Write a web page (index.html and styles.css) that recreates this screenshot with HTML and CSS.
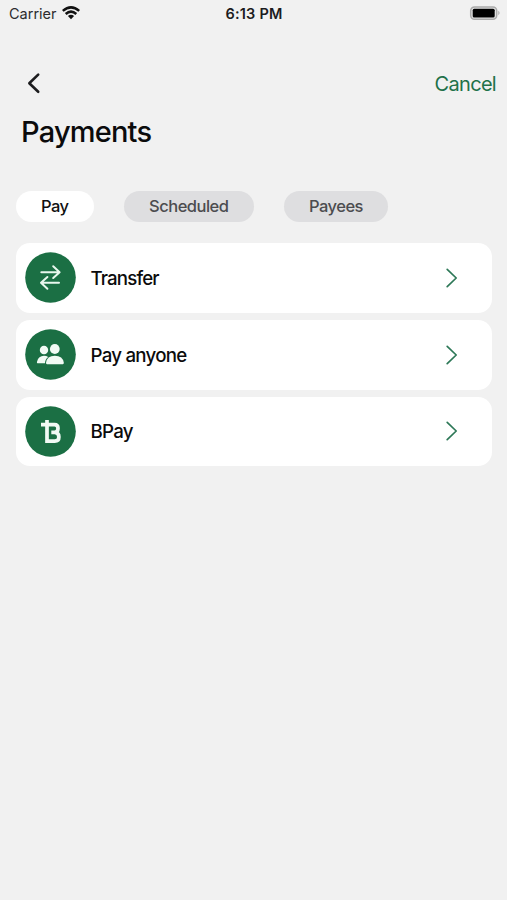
FILE: index.html
```html
<!DOCTYPE html>
<html lang="en">
<head>
<meta charset="utf-8">
<title>Payments</title>
<link rel="stylesheet" href="styles.css">
</head>
<body>
<header class="status">
  <div class="status-left"><span class="carrier">Carrier</span>
    <svg class="wifi" width="18" height="14" viewBox="0 0 18 14"><g fill="none" stroke="#111" stroke-width="2.5"><path d="M.8 4.9Q9-2.2 17.2 4.9"/><path d="M3.7 8Q9 3.2 14.3 8"/></g><path d="M5.9 10Q9 7.4 12.1 10L9 13.3Z" fill="#111"/></svg>
  </div>
  <span class="clock">6:13 PM</span>
  <svg class="battery" width="32" height="16" viewBox="0 0 32 16"><rect x="1.7" y="1.9" width="26" height="12.4" rx="3.8" fill="#e4e4e4" stroke="#aaa" stroke-width="1.5"/><rect x="3.7" y="3.8" width="22" height="8.7" rx="1.5" fill="#000"/><path d="M29.3 5.8q2.6 2.2 0 4.4z" fill="#aaa"/></svg>
</header>
<nav class="nav">
  <svg class="back" width="16" height="24" viewBox="0 0 16 24"><path d="M12.2 3.6L3.3 12.2L12.2 20.8" fill="none" stroke="#1c1c1e" stroke-width="2.6" stroke-linecap="round" stroke-linejoin="round"/></svg>
  <a class="cancel">Cancel</a>
</nav>
<h1 class="title">Payments</h1>
<div class="tabs">
  <button class="tab tab-pay active">Pay</button>
  <button class="tab tab-scheduled">Scheduled</button>
  <button class="tab tab-payees">Payees</button>
</div>
<main class="list">
  <section class="row">
    <svg class="icon" viewBox="0 0 51 51"><circle cx="25.5" cy="25.5" r="25.3"/><path class="line" d="M16.3 20.3H34M28.2 14.3L34.6 20.3L28.2 26M34 30.8H16.3M22.4 25L16 30.8L22.4 36.7"/></svg>
    <span class="label transfer">Transfer</span>
    <svg class="chevron" viewBox="0 0 14 20"><path d="M2.2 1.4L11.2 10L2.2 18.6"/></svg>
  </section>
  <section class="row">
    <svg class="icon" viewBox="0 0 51 51"><circle cx="25.5" cy="25.5" r="25.3"/><g class="solid"><ellipse cx="19" cy="21" rx="4.2" ry="4.3"/><path d="M12.6 34.3Q11.6 34.3 12 32.7Q13.5 26.9 19 26.8Q21.4 26.8 23.2 27.9Q20 30 20 34.3Z"/><ellipse cx="29.8" cy="20" rx="4.9" ry="5.1"/><path d="M22 35.2Q20.9 35.2 21 33.8Q21.9 26.7 29.8 26.7Q37.9 26.7 38.8 33.8Q38.9 35.2 37.8 35.2Z"/></g></svg>
    <span class="label anyone">Pay anyone</span>
    <svg class="chevron" viewBox="0 0 14 20"><path d="M2.2 1.4L11.2 10L2.2 18.6"/></svg>
  </section>
  <section class="row">
    <svg class="icon" viewBox="0 0 51 51"><circle cx="25.5" cy="25.5" r="25.3"/><path class="mark" d="M16 18.6H29.5Q33 18.6 33 22.3Q33 26.4 29.5 26.4H26.3M29.8 26.4Q33.9 26.8 33.9 31Q33.9 35.1 29.8 35.1H22V14"/></svg>
    <span class="label bpay">BPay</span>
    <svg class="chevron" viewBox="0 0 14 20"><path d="M2.2 1.4L11.2 10L2.2 18.6"/></svg>
  </section>
</main>
</body>
</html>
```
FILE: styles.css
```css
* { box-sizing: border-box; }
body {
  margin: 0;
  min-height: 900px;
  background: #f1f1f1;
  color: #0b0b0c;
  font-family: Inter, "Liberation Sans", sans-serif;
}
svg { display: block; flex: none; }
.status {
  display: grid;
  grid-template-columns: 1fr auto 1fr;
  align-items: center;
  height: 26px;
  padding: 0 6px 0 9px;
}
.status-left { display: flex; align-items: center; gap: 5px; }
.carrier { font-size: 14.5px; letter-spacing: 0; color: #2c2c2e; }
.clock { font-size: 14.5px; font-weight: 600; letter-spacing: 0.2px; margin-right: 2px; color: #1c1c1e; }
.battery { justify-self: end; }
.nav {
  display: flex;
  justify-content: space-between;
  align-items: center;
  height: 40px;
  margin-top: 37px;
  padding: 0 11px 0 26px;
}
.cancel { font-size: 20px; line-height: 40px; letter-spacing: -0.7px; margin-top: 1px; color: #217149; }
.title {
  margin: 9px 0 0 21px;
  font-size: 29px;
  line-height: 40px;
  font-weight: 500;
  letter-spacing: -0.8px;
}
.tabs { display: flex; gap: 30.2px; margin: 39px 0 0 16px; }
.tab {
  height: 31px;
  padding: 0;
  border: 0;
  border-radius: 16px;
  background: #dedee0;
  color: #4c4c4f;
  font: 500 16.5px/31px Inter, "Liberation Sans", sans-serif;
  letter-spacing: -0.5px;
}
.tab.active { background: #fff; color: #111; }
.tab-pay { width: 77.6px; }
.tab-scheduled { width: 130px; }
.tab-payees { width: 104px; }
.list { display: flex; flex-direction: column; gap: 7px; margin: 21px 15px 0 16px; }
.row {
  display: flex;
  align-items: center;
  height: 69.8px;
  padding: 0 33px 0 9px;
  border-radius: 14px;
  background: #fff;
}
.icon { width: 51px; height: 51px; fill: #1b6f44; }
.line { fill: none; stroke: #e8f7ed; stroke-width: 2; stroke-linecap: round; stroke-linejoin: round; }
.solid { fill: #f1faf4; }
.mark { fill: none; stroke: #f1faf4; stroke-width: 3.7; }
.label { flex: 1; margin-left: 14.5px; padding-top: 1px; font-size: 18.7px; font-weight: 500; letter-spacing: -0.75px; }
.transfer { letter-spacing: -0.85px; }
.chevron { width: 14px; height: 20px; fill: none; stroke: #2d7857; stroke-width: 1.7; stroke-linecap: round; stroke-linejoin: round; }
```
